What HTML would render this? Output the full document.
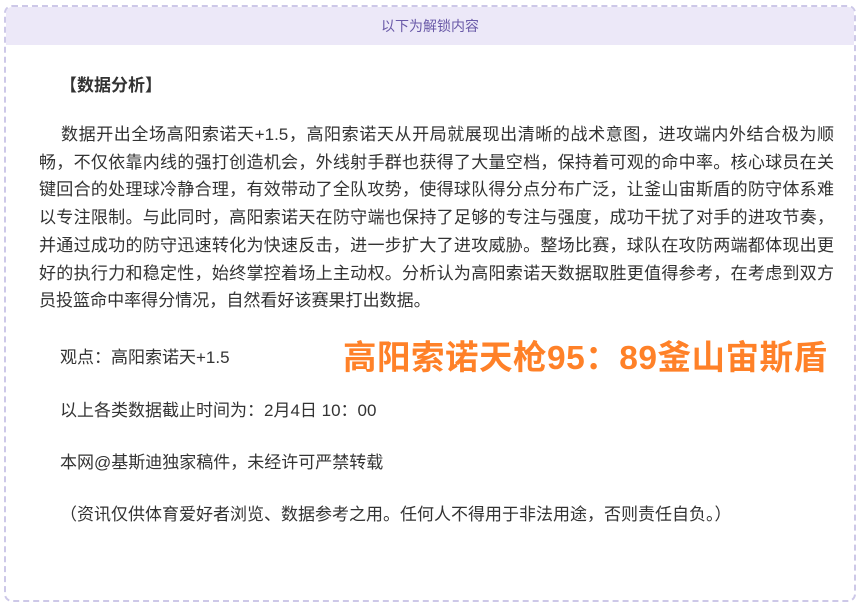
<!DOCTYPE html>
<html><head><meta charset="utf-8"><style>
html,body{margin:0;padding:0;background:#fff;width:861px;height:605px;overflow:hidden}
body{font-family:"Liberation Sans","Noto Sans CJK SC",sans-serif;color:#333}
.box{position:absolute;left:4px;top:5px;width:852px;height:597px;border:2px dashed #cdc8e8;border-radius:8px;box-sizing:border-box;overflow:hidden}
.hd{height:38px;background:#ece8f8;text-align:center;line-height:38px;font-size:14px;color:#6a5aa8}
.t{position:absolute;font-size:17px;white-space:nowrap}
.p{position:absolute;left:33px;top:114px;width:795px;font-size:17.05px;line-height:27.7px;text-indent:22px;text-align:justify}
.big{position:absolute;left:337px;top:323px;font-size:33.5px;font-weight:bold;color:#ff8128;white-space:nowrap;letter-spacing:0.5px}
</style></head><body>
<div class="box">
<div class="hd">以下为解锁内容</div>
<div class="t" style="left:54px;top:64px;font-weight:bold">【数据分析】</div>
<div class="p">数据开出全场高阳索诺天+1.5，高阳索诺天从开局就展现出清晰的战术意图，进攻端内外结合极为顺畅，不仅依靠内线的强打创造机会，外线射手群也获得了大量空档，保持着可观的命中率。核心球员在关键回合的处理球冷静合理，有效带动了全队攻势，使得球队得分点分布广泛，让釜山宙斯盾的防守体系难以专注限制。与此同时，高阳索诺天在防守端也保持了足够的专注与强度，成功干扰了对手的进攻节奏，并通过成功的防守迅速转化为快速反击，进一步扩大了进攻威胁。整场比赛，球队在攻防两端都体现出更好的执行力和稳定性，始终掌控着场上主动权。分析认为高阳索诺天数据取胜更值得参考，在考虑到双方员投篮命中率得分情况，自然看好该赛果打出数据。</div>
<div class="t" style="left:54px;top:336px">观点：高阳索诺天+1.5</div>
<div class="big">高阳索诺天枪95：89釜山宙斯盾</div>
<div class="t" style="left:54px;top:389px">以上各类数据截止时间为：2月4日 10：00</div>
<div class="t" style="left:54px;top:441px">本网@基斯迪独家稿件，未经许可严禁转载</div>
<div class="t" style="left:54px;top:493px">（资讯仅供体育爱好者浏览、数据参考之用。任何人不得用于非法用途，否则责任自负。）</div>
</div>
</body></html>
